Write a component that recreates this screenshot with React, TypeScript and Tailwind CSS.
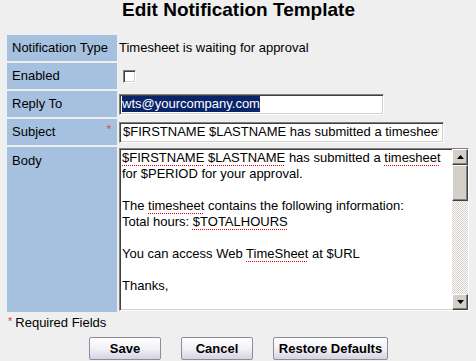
import React from "react";

const sq = "underline decoration-dotted decoration-[#e00000] underline-offset-[3px] decoration-[1px]";

function Label({ children, req, top }: { children: React.ReactNode; req?: boolean; top?: boolean }) {
  return (
    <div
      className={`w-[110px] shrink-0 bg-[#a5c1df] pl-[5px] pr-[6px] flex justify-between ${top ? "items-start pt-[6px]" : "items-center"}`}
    >
      <span>{children}</span>
      {req && <span className="text-[#e8383d] text-[11px] leading-none -mt-[6px]">*</span>}
    </div>
  );
}

const inset =
  "border border-[#808080] border-b-white border-r-white shadow-[inset_1px_1px_0_#404040,inset_-1px_-1px_0_#d4d0c8] bg-white";

const raised =
  "bg-[#d4d0c8] border border-white border-b-[#404040] border-r-[#404040] shadow-[inset_-1px_-1px_0_#808080]";

function Btn({ children, w }: { children: React.ReactNode; w: string }) {
  return (
    <div
      className={`${w} h-[23px] flex items-center justify-center font-bold text-[13px] border border-[#8c8c9c] rounded-[2px] bg-gradient-to-b from-white via-[#f2f2f6] to-[#d4d4e2]`}
    >
      {children}
    </div>
  );
}

export default function App() {
  return (
    <div className="w-[476px] h-[361px] overflow-hidden bg-[#efefef] text-black text-[13px] leading-[16px] font-['Liberation_Sans',Arial,sans-serif]">
      <h1 className="text-center font-bold text-[19px] leading-[20px] pl-[1px]">Edit Notification Template</h1>
      <div className="mt-[15px] px-[7px] flex flex-col gap-[2px]">
        <div className="flex gap-[2px] h-[26px]">
          <Label>Notification Type</Label>
          <div className="flex items-center">Timesheet is waiting for approval</div>
        </div>
        <div className="flex gap-[2px] h-[26px]">
          <Label>Enabled</Label>
          <div className="flex items-center pl-[4px]">
            <div className={`w-[13px] h-[13px] ${inset}`} />
          </div>
        </div>
        <div className="flex gap-[2px] h-[26px]">
          <Label>Reply To</Label>
          <div className="flex items-center">
            <div className={`w-[265px] h-[21px] ${inset} flex items-center pl-[2px]`}>
              <span className="bg-[#0a246a] text-white leading-[16px]">wts@yourcompany.com</span>
            </div>
          </div>
        </div>
        <div className="flex gap-[2px] h-[26px]">
          <Label req>Subject</Label>
          <div className="flex items-center">
            <div className={`w-[325px] h-[21px] ${inset} flex items-center pl-[1px] pr-[4px]`}>
              <div className="flex-1 pl-[2px] overflow-hidden whitespace-nowrap">
                $FIRSTNAME $LASTNAME has submitted a timesheet
              </div>
            </div>
          </div>
        </div>
        <div className="flex gap-[2px] h-[165px]">
          <Label top>Body</Label>
          <div className="flex items-center">
            <div className={`w-[350px] h-[163px] ${inset} flex overflow-hidden`}>
              <div className="flex-1 pl-[2px] pt-[1px] overflow-hidden">
                <div>
                  <span className={sq}>$FIRSTNAME</span> <span className={sq}>$LASTNAME</span> has submitted a{" "}
                  <span className={sq}>timesheet</span>
                </div>
                <div>for $PERIOD for your approval.</div>
                <div>&nbsp;</div>
                <div>
                  The <span className={sq}>timesheet</span> contains the following information:
                </div>
                <div>
                  Total hours: <span className={sq}>$TOTALHOURS</span>
                </div>
                <div>&nbsp;</div>
                <div>
                  You can access Web <span className={sq}>TimeSheet</span> at $URL
                </div>
                <div>&nbsp;</div>
                <div>Thanks,</div>
                <div>&nbsp;</div>
              </div>
              <div className="w-[16px] shrink-0 flex flex-col bg-[repeating-conic-gradient(#d4d0c8_0_25%,#ffffff_0_50%)] bg-[length:2px_2px]">
                <div className={`h-[16px] ${raised} flex items-center justify-center`}>
                  <svg width="7" height="4" viewBox="0 0 7 4"><path d="M3.5 0L7 4H0z" fill="#000" /></svg>
                </div>
                <div className={`h-[36px] ${raised}`} />
                <div className="flex-1" />
                <div className={`h-[16px] ${raised} flex items-center justify-center`}>
                  <svg width="7" height="4" viewBox="0 0 7 4"><path d="M0 0H7L3.5 4z" fill="#000" /></svg>
                </div>
              </div>
            </div>
          </div>
        </div>
      </div>
      <div className="pl-[8px] mt-[3px] flex items-start h-[17px]">
        <span className="text-[#e8383d] text-[11px] leading-none mt-[1px] mr-[3px]">*</span>
        <span>Required Fields</span>
      </div>
      <div className="mt-[5px] flex justify-center gap-[20px] pl-[1px]">
        <Btn w="w-[72px]">Save</Btn>
        <Btn w="w-[72px]">Cancel</Btn>
        <Btn w="w-[115px]">Restore Defaults</Btn>
      </div>
    </div>
  );
}
